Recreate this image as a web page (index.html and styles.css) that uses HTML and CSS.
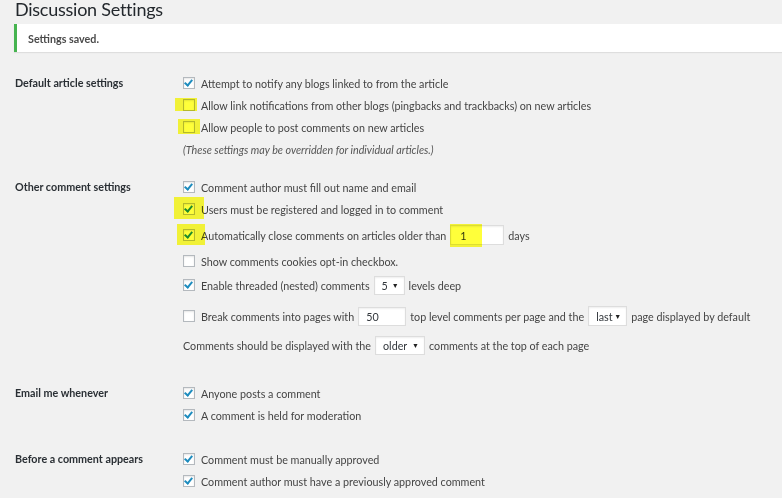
FILE: index.html
```html
<!DOCTYPE html>
<html>
<head>
<meta charset="utf-8">
<link rel="stylesheet" href="styles.css">
</head>
<body>
<div class="wrap">
  <h1 class="title">Discussion Settings</h1>
  <div class="notice"><p>Settings saved.</p></div>

  <div class="section s1">
    <div class="label">Default article settings</div>
    <div class="fields">
      <div class="row"><span class="cb checked"></span><span>Attempt to notify any blogs linked to from the article</span></div>
      <div class="row"><span class="cb hlbox"><span class="hl hl1"></span></span><span>Allow link notifications from other blogs (pingbacks and trackbacks) on new articles</span></div>
      <div class="row"><span class="cb hlbox"><span class="hl hl2"></span></span><span>Allow people to post comments on new articles</span></div>
      <div class="row note">(These settings may be overridden for individual articles.)</div>
    </div>
  </div>

  <div class="section s2">
    <div class="label">Other comment settings</div>
    <div class="fields">
      <div class="row"><span class="cb checked"></span><span>Comment author must fill out name and email</span></div>
      <div class="row"><span class="cb checked hlbox"><span class="hl hl3"></span></span><span>Users must be registered and logged in to comment</span></div>
      <div class="row tall30"><span class="cb checked hlbox"><span class="hl hl4"></span></span><span>Automatically close comments on articles older than</span><span class="input w54 hlbox">1<span class="hl hl5"></span></span><span>days</span></div>
      <div class="row"><span class="cb"></span><span>Show comments cookies opt-in checkbox.</span></div>
      <div class="row tall26"><span class="cb checked"></span><span>Enable threaded (nested) comments</span><span class="select w31">5<span class="arrow">▼</span></span><span>levels deep</span></div>
      <div class="row tall36"><span class="cb"></span><span>Break comments into pages with</span><span class="input w48">50</span><span>top level comments per page and the</span><span class="select w39">last<span class="arrow">▼</span></span><span>page displayed by default</span></div>
      <div class="row"><span>Comments should be displayed with the</span><span class="select w50">older<span class="arrow">▼</span></span><span>comments at the top of each page</span></div>
    </div>
  </div>

  <div class="section s3">
    <div class="label">Email me whenever</div>
    <div class="fields">
      <div class="row"><span class="cb checked"></span><span>Anyone posts a comment</span></div>
      <div class="row"><span class="cb checked"></span><span>A comment is held for moderation</span></div>
    </div>
  </div>

  <div class="section s4">
    <div class="label">Before a comment appears</div>
    <div class="fields">
      <div class="row"><span class="cb checked"></span><span>Comment must be manually approved</span></div>
      <div class="row"><span class="cb checked"></span><span>Comment author must have a previously approved comment</span></div>
    </div>
  </div>
</div>
</body>
</html>
```

FILE: styles.css
```css
html, body {
  margin: 0;
  padding: 0;
  background: #f1f1f1;
  overflow: hidden;
}
body {
  font-family: Lato, "Noto Sans", sans-serif;
  font-size: 10.75px;
  color: #444;
  width: 782px;
  height: 498px;
}
.wrap {
  padding-left: 14px;
}
.title {
  margin: 0;
  padding-left: 1px;
  font-size: 18px;
  letter-spacing: -0.25px;
  font-weight: 400;
  color: #23282d;
  line-height: 19px;
  height: 24px;
}
.notice {
  background: #fff;
  border-left: 3px solid #46b450;
  box-shadow: 0 1px 1px rgba(0,0,0,.08);
  height: 28px;
  display: flex;
  align-items: center;
}
.notice p {
  margin: 0;
  padding-left: 11px;
  font-weight: 700;
  color: #4a4a4a;
}
.section {
  display: flex;
}
.s1 { margin-top: 20px; }
.s2 { margin-top: 16px; }
.s3 { margin-top: 26px; }
.s4 { margin-top: 22px; }
.label {
  width: 168px;
  flex: none;
  font-weight: 700;
  color: #2a2f34;
  line-height: 22px;
  padding-left: 1px;
}
.fields {
  display: flex;
  flex-direction: column;
}
.row {
  height: 22px;
  display: flex;
  align-items: center;
  gap: 4px;
  white-space: nowrap;
}
.row.tall30 { height: 30px; }
.row.tall26 { height: 26px; }
.row.tall36 { height: 36px; }
.note {
  font-style: italic;
  color: #555;
}
.cb {
  width: 12px;
  height: 12px;
  box-sizing: border-box;
  border: 1px solid #b4b9be;
  background: #fff;
  box-shadow: inset 0 1px 2px rgba(0,0,0,.1);
  flex: none;
  position: relative;
  margin-right: 2px;
}
.cb.checked::after {
  content: "";
  position: absolute;
  left: 2px;
  top: 0px;
  width: 3px;
  height: 6px;
  border-right: 2px solid #1e8cbe;
  border-bottom: 2px solid #1e8cbe;
  transform: rotate(40deg);
}
.hlbox { position: relative; }
.hl {
  position: absolute;
  background: #ffff3a;
  mix-blend-mode: multiply;
  z-index: 2;
}
.hl1 { left: -9px; top: -2px; width: 22px; height: 13px; }
.hl2 { left: -6px; top: -3px; width: 22px; height: 15px; }
.hl3 { left: -10px; top: -7px; width: 30px; height: 22px; }
.hl4 { left: -7px; top: -6px; width: 28px; height: 21px; }
.hl5 { left: -1px; top: -2px; width: 32px; height: 23px; }
.input, .select {
  background: #fff;
  border: 1px solid #ddd;
  box-shadow: inset 0 1px 2px rgba(0,0,0,.07);
  box-sizing: border-box;
  color: #32373c;
  display: flex;
  align-items: center;
  padding-left: 7px;
  position: relative;
}
.input.w54 { width: 54px; height: 20px; padding-left: 9px; }
.input.w48 { width: 48px; height: 19px; }
.select { height: 19px; }
.select.w31 { width: 31px; }
.select.w39 { width: 39px; height: 20px; }
.select.w50 { width: 50px; }
.arrow {
  position: absolute;
  right: 5px;
  top: 50%;
  transform: translateY(-50%);
  font-size: 7px;
  color: #222;
}
```
